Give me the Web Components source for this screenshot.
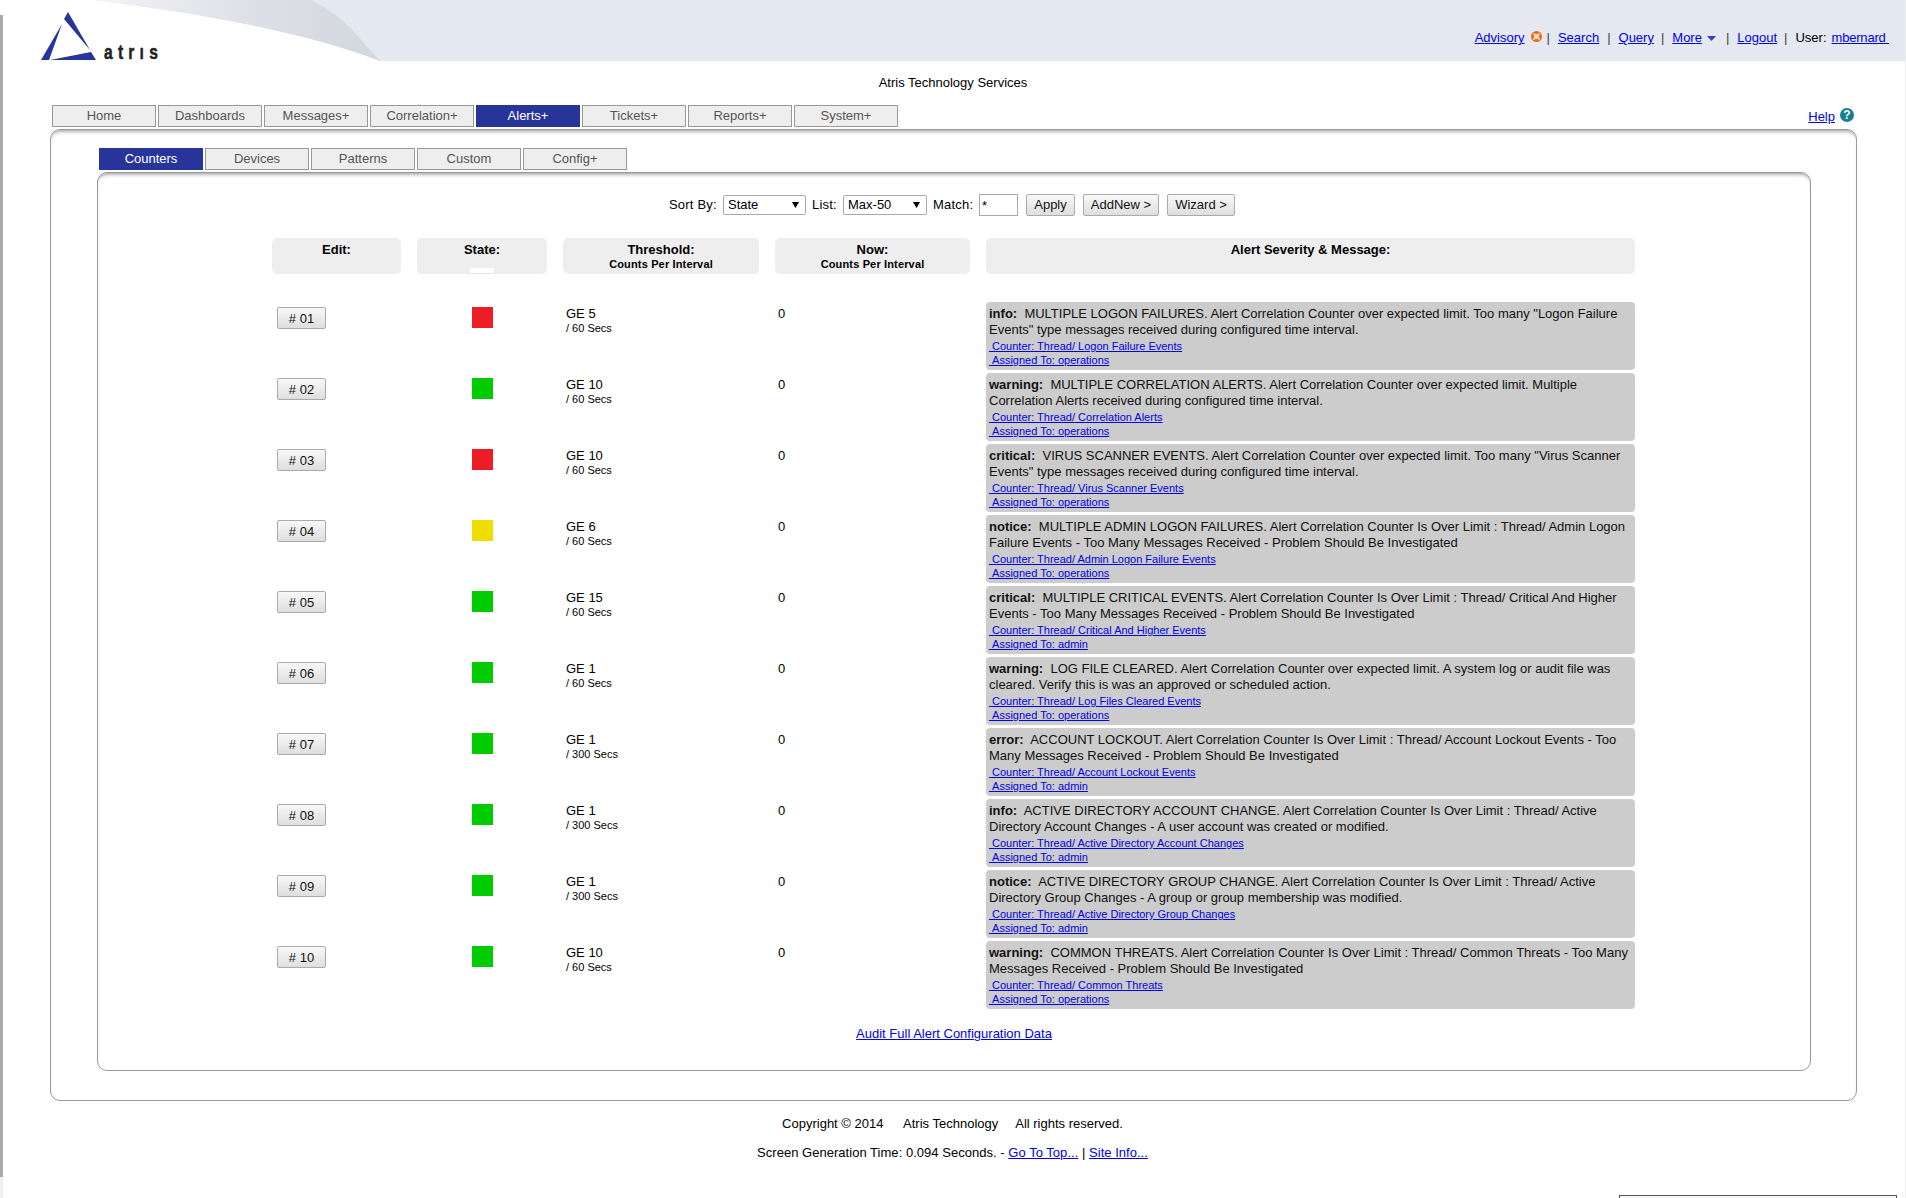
<!DOCTYPE html>
<html lang="en">
<head>
<meta charset="utf-8">
<title>Atris - Alert Counters</title>
<style>
  html, body { margin: 0; padding: 0; height: 1198px; overflow: hidden; background: #fff; }
  body { font: 13px/16px "Liberation Sans", Arial, sans-serif; color: #000; }
</style>
</head>
<body>
<atris-page>
  <atris-header slot="header"></atris-header>
  <atris-tabs id="main-tabs" items="Home,Dashboards,Messages+,Correlation+,Alerts+,Tickets+,Reports+,System+" active="Alerts+">
    <help-link slot="end"></help-link>
  </atris-tabs>
  <atris-panel outer>
    <atris-tabs items="Counters,Devices,Patterns,Custom,Config+" active="Counters"></atris-tabs>
    <atris-panel>
      <filter-bar></filter-bar>
      <alert-head></alert-head>
      <alert-row num="01" state="red" ge="GE 5" secs="60" severity="info" counter="Logon Failure Events" assigned="operations">MULTIPLE LOGON FAILURES. Alert Correlation Counter over expected limit. Too many "Logon Failure<br>Events" type messages received during configured time interval.</alert-row>
      <alert-row num="02" state="green" ge="GE 10" secs="60" severity="warning" counter="Correlation Alerts" assigned="operations">MULTIPLE CORRELATION ALERTS. Alert Correlation Counter over expected limit. Multiple<br>Correlation Alerts received during configured time interval.</alert-row>
      <alert-row num="03" state="red" ge="GE 10" secs="60" severity="critical" counter="Virus Scanner Events" assigned="operations">VIRUS SCANNER EVENTS. Alert Correlation Counter over expected limit. Too many "Virus Scanner<br>Events" type messages received during configured time interval.</alert-row>
      <alert-row num="04" state="yellow" ge="GE 6" secs="60" severity="notice" counter="Admin Logon Failure Events" assigned="operations">MULTIPLE ADMIN LOGON FAILURES. Alert Correlation Counter Is Over Limit : Thread/ Admin Logon<br>Failure Events - Too Many Messages Received - Problem Should Be Investigated</alert-row>
      <alert-row num="05" state="green" ge="GE 15" secs="60" severity="critical" counter="Critical And Higher Events" assigned="admin">MULTIPLE CRITICAL EVENTS. Alert Correlation Counter Is Over Limit : Thread/ Critical And Higher<br>Events - Too Many Messages Received - Problem Should Be Investigated</alert-row>
      <alert-row num="06" state="green" ge="GE 1" secs="60" severity="warning" counter="Log Files Cleared Events" assigned="operations">LOG FILE CLEARED. Alert Correlation Counter over expected limit. A system log or audit file was<br>cleared. Verify this is was an approved or scheduled action.</alert-row>
      <alert-row num="07" state="green" ge="GE 1" secs="300" severity="error" counter="Account Lockout Events" assigned="admin">ACCOUNT LOCKOUT. Alert Correlation Counter Is Over Limit : Thread/ Account Lockout Events - Too<br>Many Messages Received - Problem Should Be Investigated</alert-row>
      <alert-row num="08" state="green" ge="GE 1" secs="300" severity="info" counter="Active Directory Account Changes" assigned="admin">ACTIVE DIRECTORY ACCOUNT CHANGE. Alert Correlation Counter Is Over Limit : Thread/ Active<br>Directory Account Changes - A user account was created or modified.</alert-row>
      <alert-row num="09" state="green" ge="GE 1" secs="300" severity="notice" counter="Active Directory Group Changes" assigned="admin">ACTIVE DIRECTORY GROUP CHANGE. Alert Correlation Counter Is Over Limit : Thread/ Active<br>Directory Group Changes - A group or group membership was modified.</alert-row>
      <alert-row num="10" state="green" ge="GE 10" secs="60" severity="warning" counter="Common Threats" assigned="operations">COMMON THREATS. Alert Correlation Counter Is Over Limit : Thread/ Common Threats - Too Many<br>Messages Received - Problem Should Be Investigated</alert-row>
      <audit-link></audit-link>
    </atris-panel>
  </atris-panel>
  <atris-footer></atris-footer>
</atris-page>

<script>
/**
 * Base class: attaches an open shadow root with the given markup.
 */
class ShadowElement extends HTMLElement {
  render(html) {
    if (!this.shadowRoot) this.attachShadow({ mode: 'open' });
    this.shadowRoot.innerHTML = html;
  }
}

class AtrisPage extends ShadowElement {
  connectedCallback() {
    this.render(`<style>
      :host { display: block; position: relative; height: 1198px; box-sizing: border-box; border-right: 1px solid #eee; }
      .edge { position: absolute; z-index: 2; left: 0; top: 15px; width: 3px; height: 1162px; background: #aaa; }
      .edge-low { position: absolute; left: 0; top: 1177px; width: 3px; height: 21px; background: #f0f0f0; }
      .corner { position: absolute; left: 1619px; top: 1195px; width: 278px; height: 3px; box-sizing: border-box;
        background: #f6f6f6; border-top: 1px solid #555; border-left: 1px solid #555; border-right: 1px solid #555; }
      .title { text-align: center; padding-left: 1px; margin: 14px 0 14px; }
    </style>
    <div class="edge"></div><div class="edge-low"></div>
    <slot name="header"></slot>
    <div class="title">Atris Technology Services</div>
    <slot></slot>
    <div class="corner"></div>`);
  }
}

class AtrisHeader extends ShadowElement {
  connectedCallback() {
    this.render(`<style>
      :host { display: flex; position: relative; height: 61px; background: #e4e8f0; justify-content: flex-end; align-items: center; }
      .swoosh { position: absolute; left: 0; top: 0; }
      nav { position: relative; display: flex; align-items: center; padding: 15px 16px 0 0; white-space: nowrap; }
      a { color: #0000e6; text-decoration: underline; }
      i { font-style: normal; color: #444; }
      .sep { margin: 0 8px; }
      .alert { margin: -3px 5px 0 6px; }
      .caret { margin: 0 10px 0 5px; }
      .name { letter-spacing: -.2px; }
    </style>
    <svg class="swoosh" width="400" height="68" viewBox="0 0 400 68">
      <defs><linearGradient id="band" x1="0" x2="1" y1="0" y2="0">
        <stop offset="0" stop-color="#f3f4f6"/><stop offset=".55" stop-color="#dde0e6"/><stop offset="1" stop-color="#d3d7de"/>
      </linearGradient></defs>
      <path d="M0 0H93C190 12 300 30 380 61H0Z" fill="#fff"/>
      <path d="M93 0H310C345 15 360 40 380 61C300 30 190 12 93 0Z" fill="url(#band)"/>
      <path fill="#27359a" d="M68 12L90 50L64 19ZM62 24L41 60H49ZM91 52L96 60H50Z"/>
      <text transform="translate(104 59) scale(.78 1)" font-family="Liberation Sans" font-weight="bold" font-size="20"
        fill="#222" stroke="#222" stroke-width=".5" textLength="69" lengthAdjust="spacing">atrıs</text>
    </svg>
    <nav>
      <a>Advisory</a>
      <svg class="alert" width="11" height="11" viewBox="0 0 11 11">
        <circle cx="5.5" cy="5.5" r="4" fill="none" stroke="#f96a0a" stroke-width="3"/>
        <path d="M2.3 2.3L3.8 3.8M8.7 2.3L7.2 3.8M2.3 8.7L3.8 7.2M8.7 8.7L7.2 7.2" stroke="#fff" stroke-width="1.2"/>
      </svg>
      <i>|</i><a class="sep">Search</a><i>|</i><a class="sep" style="margin-right:7px">Query</a><i>|</i><a class="sep" style="margin-right:0">More</a>
      <svg class="caret" width="9" height="5" viewBox="0 0 9 5"><path d="M0 0H9L4.5 5Z" fill="#2f3fc8"/></svg>
      <i>|</i><a class="sep" style="margin-right:7px">Logout</a><i>|</i><span class="sep" style="margin-right:5px">User:</span><a class="name">mbernard&nbsp;</a>
    </nav>`);
  }
}

class AtrisTabs extends ShadowElement {
  connectedCallback() {
    const items = this.getAttribute('items').split(',');
    const active = this.getAttribute('active');
    const tabs = items.map((name) => `<div class="tab${name === active ? ' on' : ''}">${name}</div>`).join('');
    this.render(`<style>
      :host { display: flex; gap: 2px; align-items: flex-start; }
      :host(#main-tabs) { padding: 0 51px 0 52px; margin-bottom: 2px; }
      .tab { box-sizing: border-box; width: 104px; height: 22px; line-height: 20px; text-align: center;
        background: #eee; border: 1px solid #999; color: #555; }
      .on { background: #27359a; border-color: #27359a; color: #fff; }
      ::slotted([slot=end]) { margin-left: auto; }
    </style>${tabs}<slot name="end"></slot>`);
  }
}

class HelpLink extends ShadowElement {
  connectedCallback() {
    this.render(`<style>
      :host { display: flex; gap: 5px; align-items: flex-start; height: 22px; }
      a { color: #0000e6; text-decoration: underline; padding-top: 4px; }
      b { display: block; width: 14px; height: 14px; margin-top: 3px; border-radius: 50%; background: #17808f; color: #fff;
        font: bold 12px/14px "Liberation Sans", Arial, sans-serif; text-align: center; }
    </style><a>Help</a><b>?</b>`);
  }
}

class AtrisPanel extends ShadowElement {
  connectedCallback() {
    this.render(`<style>
      :host { display: block; box-sizing: border-box; border: 1px solid #999; border-radius: 10px; background: #fff;
        box-shadow: inset 0 4px 4px -3px rgba(0,0,0,.45);
        margin: 2px 0 0 0; padding: 21px 0 28px; }
      :host([outer]) { width: 1807px; margin: 0 0 0 50px; padding: 18px 45px 29px 48px; }
      ::slotted(atris-panel) { margin-left: -2px; }
    </style><slot></slot>`);
  }
}

class FilterBar extends ShadowElement {
  connectedCallback() {
    this.render(`<style>
      :host { display: flex; justify-content: center; align-items: center; height: 22px; padding-right: 4px; margin-bottom: 22px; }
      label { display: block; white-space: nowrap; letter-spacing: .2px; }
      .pick { position: relative; display: block; margin: 0 6px; height: 20px; }
      select { appearance: none; -webkit-appearance: none; display: block; box-sizing: border-box; height: 20px; margin: 0;
        padding: 0 0 0 4px; background: #fff; border: 1px solid #aaa; border-radius: 2px; font: inherit; color: #000; }
      .pick svg { position: absolute; right: 7px; top: 7px; }
      input { box-sizing: border-box; width: 39px; height: 22px; margin: 0 0 0 6px; padding: 0 2px; border: 1px solid #aaa;
        font: inherit; background: #fff; }
      button { box-sizing: border-box; height: 22px; margin: 0 0 0 8px; padding: 0; border: 1px solid #aaa; border-radius: 2px;
        background: linear-gradient(#f8f8f8, #dedede); font: inherit; color: #111; }
    </style>
    <label style="width:48px">Sort By:</label>
    <span class="pick"><select style="width:83px"><option>State</option></select>
      <svg width="7" height="6" viewBox="0 0 7 6"><path d="M0 0H7L3.5 6Z"/></svg></span>
    <label style="width:25px">List:</label>
    <span class="pick"><select style="width:84px"><option>Max-50</option></select>
      <svg width="7" height="6" viewBox="0 0 7 6"><path d="M0 0H7L3.5 6Z"/></svg></span>
    <label style="width:40px">Match:</label>
    <input value="*">
    <button style="width:49px">Apply</button>
    <button style="width:76px">AddNew &gt;</button>
    <button style="width:68px">Wizard &gt;</button>`);
  }
}

const GRID_STYLE = `display: grid; grid-template-columns: 129px 130px 196px 195px 649px; column-gap: 16px; width: 1363px; margin-left: 174px;`;

class AlertHead extends ShadowElement {
  connectedCallback() {
    const cell = (title, sub = '') => `<div class="c"><b>${title}</b>${sub ? `<small>${sub}</small>` : ''}</div>`;
    this.render(`<style>
      :host { ${GRID_STYLE} margin-bottom: 28px; }
      .c { position: relative; height: 36px; box-sizing: border-box; padding-top: 4px; background: #eee; border-radius: 5px; text-align: center; }
      b { display: block; }
      small { display: block; margin-top: -1px; font-size: 11px; font-weight: bold; line-height: 14px; letter-spacing: .15px; }
      .notch::after { content: ""; position: absolute; left: 53px; bottom: -1px; width: 24px; height: 7px; box-sizing: border-box;
        background: linear-gradient(#fff 5px, #e6e6e6 5px, #e6e6e6 6px, #fff 6px); }
    </style>
    ${cell('Edit:')}
    <div class="c notch"><b>State:</b></div>
    ${cell('Threshold:', 'Counts Per Interval')}
    ${cell('Now:', 'Counts Per Interval')}
    ${cell('Alert Severity &amp; Message:')}`);
  }
}

const STATE_COLORS = { red: '#ee1c25', green: '#00cc00', yellow: '#eedd00' };

class AlertRow extends ShadowElement {
  connectedCallback() {
    const a = (name) => this.getAttribute(name);
    this.render(`<style>
      :host { ${GRID_STYLE} height: 68px; margin-bottom: 3px; }
      button { display: block; box-sizing: border-box; width: 49px; height: 22px; margin: 5px 0 0 5px; padding: 1px 0 0; border: 1px solid #aaa;
        border-radius: 2px; background: linear-gradient(#f8f8f8, #dedede); font: inherit; color: #111; }
      .state { width: 21px; height: 21px; margin: 5px auto 0; background: ${STATE_COLORS[a('state')]}; }
      .txt { padding: 4px 0 0 3px; }
      small { display: block; font-size: 11px; line-height: 14px; margin-top: -1px; }
      .msg { box-sizing: border-box; height: 68px; padding: 4px 0 0 3px; background: #ccc; border-radius: 4px; white-space: nowrap; color: #111; }
      .links { margin-top: 1px; font-size: 11px; line-height: 14px; }
      a { display: block; width: fit-content; color: #0000e6; text-decoration: underline; }
    </style>
    <div><button>#&nbsp;${a('num')}</button></div>
    <div><div class="state"></div></div>
    <div class="txt">${a('ge')}<small>/ ${a('secs')} Secs</small></div>
    <div class="txt">0</div>
    <div class="msg"><b>${a('severity')}:</b>&nbsp; <slot></slot>
      <div class="links"><a>&nbsp;Counter: Thread/ ${a('counter')}</a><a>&nbsp;Assigned To: ${a('assigned')}</a></div>
    </div>`);
  }
}

class AuditLink extends ShadowElement {
  connectedCallback() {
    this.render(`<style>
      :host { display: block; text-align: center; margin-top: 17px; }
      a { color: #0000e6; text-decoration: underline; }
    </style><a>Audit Full Alert Configuration Data</a>`);
  }
}

class AtrisFooter extends ShadowElement {
  connectedCallback() {
    this.render(`<style>
      :host { display: block; margin-top: 15px; text-align: center; }
      div { white-space: nowrap; }
      div + div { margin-top: 13px; letter-spacing: .03px; }
      a { color: #0000e6; text-decoration: underline; }
      span { margin-left: 16px; }
      span + span { margin-left: 17px; }
    </style>
    <div>Copyright © 2014 <span>Atris Technology</span><span>All rights reserved.</span></div>
    <div>Screen Generation Time: 0.094 Seconds. - <a>Go To Top...</a> | <a>Site Info...</a></div>`);
  }
}

customElements.define('atris-page', AtrisPage);
customElements.define('atris-header', AtrisHeader);
customElements.define('atris-tabs', AtrisTabs);
customElements.define('help-link', HelpLink);
customElements.define('atris-panel', AtrisPanel);
customElements.define('filter-bar', FilterBar);
customElements.define('alert-head', AlertHead);
customElements.define('alert-row', AlertRow);
customElements.define('audit-link', AuditLink);
customElements.define('atris-footer', AtrisFooter);
</script>
</body>
</html>
